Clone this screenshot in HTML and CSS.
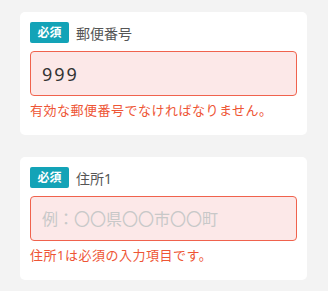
FILE: index.html
```html
<!DOCTYPE html>
<html lang="ja">
<head>
  <meta charset="UTF-8" />
  <meta name="viewport" content="width=device-width, initial-scale=1.0"/>
  <title>住所入力</title>
  <link rel="stylesheet" href="styles.css">
</head>
<body>
  <div class="form">
    <div class="field">
      <div class="field-head">
        <span class="badge">必須</span>
        <label class="label" for="zip">郵便番号</label>
      </div>
      <input class="input zip" id="zip" type="text" value="999">
      <div class="error">有効な郵便番号でなければなりません。</div>
    </div>

    <div class="field">
      <div class="field-head">
        <span class="badge">必須</span>
        <label class="label" for="addr1">住所1</label>
      </div>
      <input class="input" id="addr1" type="text" placeholder="例：〇〇県〇〇市〇〇町">
      <div class="error">住所1は必須の入力項目です。</div>
    </div>
  </div>
</body>
</html>
```

FILE: styles.css
```css
* {
  margin: 0;
  padding: 0;
  box-sizing: border-box;
  font-family: 'Noto Sans', 'Noto Sans CJK JP', sans-serif;
}

body {
  background: #f3f3f3;
  padding: 12px 0 0 20px;
}

.form {
  display: flex;
  flex-direction: column;
  gap: 22px;
  width: 287px;
}

.field {
  background: #fff;
  border-radius: 5px;
  padding: 10px 10px 16px;
}

.field-head {
  display: flex;
  align-items: center;
  gap: 7px;
  height: 21px;
}

.badge {
  width: 39px;
  text-align: center;
  background: #13a3b7;
  color: #fff;
  font-size: 12px;
  font-weight: bold;
  line-height: 21px;
  border-radius: 2px;
}

.label {
  color: #555;
  font-size: 14px;
}

.input {
  display: block;
  width: 100%;
  height: 45px;
  margin-top: 8px;
  padding: 0 11px;
  font-size: 16px;
  color: #333;
  background: #fce8e8;
  border: 1px solid #f0624d;
  border-radius: 4px;
  outline: none;
}

.input::placeholder {
  color: #c8c8c8;
}

.zip {
  font-size: 18px;
  letter-spacing: 2px;
}

.error {
  margin-top: 5px;
  color: #ee5535;
  font-size: 13px;
  line-height: 18px;
  letter-spacing: 0.5px;
}
```
